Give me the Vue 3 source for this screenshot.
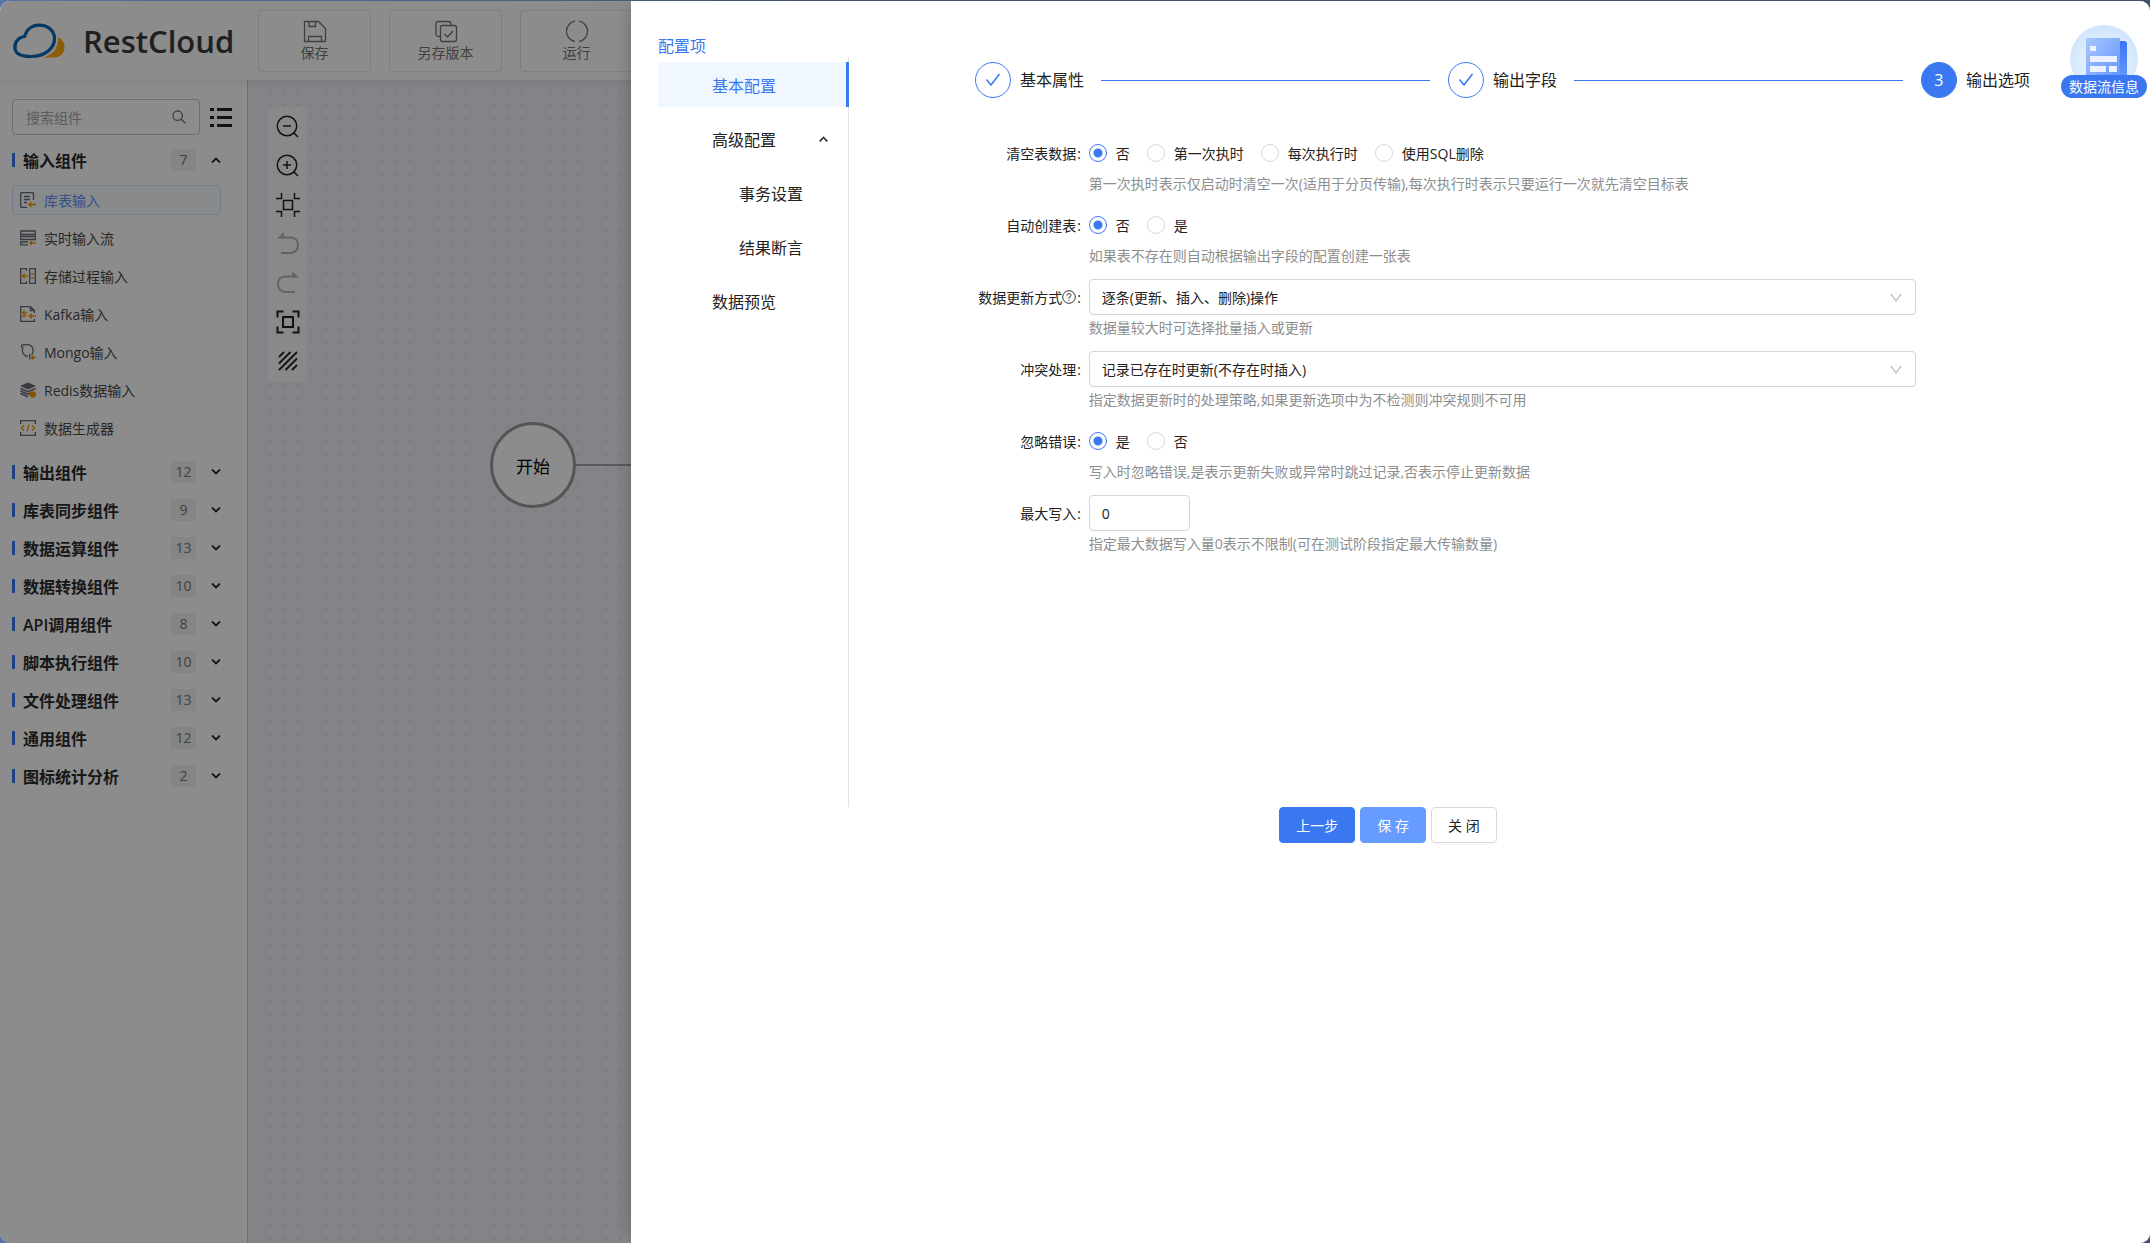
<script setup>
import { ref } from 'vue'

const actions = [
  { label: '保存', icon: 'save' },
  { label: '另存版本', icon: 'copy' },
  { label: '运行', icon: 'run' }
]

const inputs = [
  { label: '库表输入', icon: 'table' },
  { label: '实时输入流', icon: 'stream' },
  { label: '存储过程输入', icon: 'proc' },
  { label: 'Kafka输入', icon: 'kafka' },
  { label: 'Mongo输入', icon: 'mongo' },
  { label: 'Redis数据输入', icon: 'redis' },
  { label: '数据生成器', icon: 'code' }
]

const groups = [
  { label: '输入组件', count: 7, items: inputs },
  { label: '输出组件', count: 12 },
  { label: '库表同步组件', count: 9 },
  { label: '数据运算组件', count: 13 },
  { label: '数据转换组件', count: 10 },
  { label: 'API调用组件', count: 8 },
  { label: '脚本执行组件', count: 10 },
  { label: '文件处理组件', count: 13 },
  { label: '通用组件', count: 12 },
  { label: '图标统计分析', count: 2 }
]

const tools = ['缩小', '放大', '适应画布', '撤销', '重做', '全屏', '网格']

const menu = [
  { label: '基本配置', active: true },
  { label: '高级配置', open: true },
  { label: '事务设置', sub: true },
  { label: '结果断言', sub: true },
  { label: '数据预览' }
]

const steps = ['基本属性', '输出字段', '输出选项']

const fields = [
  {
    id: 'clear', label: '清空表数据', type: 'radio', value: '否',
    options: ['否', '第一次执时', '每次执行时', '使用SQL删除'],
    hint: '第一次执时表示仅启动时清空一次(适用于分页传输),每次执行时表示只要运行一次就先清空目标表'
  },
  {
    id: 'create', label: '自动创建表', type: 'radio', value: '否', options: ['否', '是'],
    hint: '如果表不存在则自动根据输出字段的配置创建一张表'
  },
  {
    id: 'update', label: '数据更新方式', help: true, type: 'select', options: ['逐条(更新、插入、删除)操作'],
    hint: '数据量较大时可选择批量插入或更新'
  },
  {
    id: 'conflict', label: '冲突处理', type: 'select', options: ['记录已存在时更新(不存在时插入)'],
    hint: '指定数据更新时的处理策略,如果更新选项中为不检测则冲突规则不可用'
  },
  {
    id: 'ignore', label: '忽略错误', type: 'radio', value: '是', options: ['是', '否'],
    hint: '写入时忽略错误,是表示更新失败或异常时跳过记录,否表示停止更新数据'
  },
  {
    id: 'max', label: '最大写入', type: 'text',
    hint: '指定最大数据写入量0表示不限制(可在测试阶段指定最大传输数量)'
  }
]

const maxWrite = ref('0')
</script>

<template>
  <div class="desktop">
    <div class="window">
      <header class="topbar">
        <div class="brand">
          <svg class="cloud" viewBox="0 0 54 36" width="54" height="36" fill="none">
            <path d="M30 34.500 C40 33 47 26 45.500 14 C50 16 53 20 52.500 25 C52 31 48 34.500 42 34.500 Z" fill="#ffa80f" />
            <path d="M3 25.500 C2 19 7 14 13 13.500 C15 6.500 20 2.500 27 2.200 C36 2 42 7.500 42.800 15 C43.500 25 33 33.500 20 33.500 C10 33.500 3.800 31.500 3 25.500 Z" stroke="#fff" stroke-width="6" fill="#fff" />
            <path d="M3 25.500 C2 19 7 14 12.500 13.500 C14.500 6.500 20 2.200 27 2.200 C36 2.200 42 7.500 42.500 15 C43 25 33 33.500 19 33.500 C10 33.500 3.800 31.500 3 25.500 Z" stroke="#0868b8" stroke-width="3.200" />
          </svg>
          <span class="brand-name">RestCloud</span>
        </div>
        <button v-for="a in actions" :key="a.label" class="action" type="button">
          <svg width="24" height="24" viewBox="0 0 24 24" fill="none" stroke="#757575" stroke-width="1.300">
            <template v-if="a.icon === 'save'">
              <path d="M1.500 2.500 H15.500 L22.500 9.500 V22.500 H1.500 Z M6 2.500 V7.500 H12.500 V2.500 M5.500 22.500 V17.500 H18.500 V22.500" />
            </template>
            <template v-else-if="a.icon === 'copy'">
              <rect x="6.500" y="6.500" width="16" height="16" rx="2" />
              <path d="M6.500 17.500 H5 Q2 17.500 2 14.500 V5 Q2 2.500 4.500 2.500 H14 Q17 2.500 17 5 V6.500 M10.500 15 L13.500 18 L19 12" />
            </template>
            <template v-else>
              <path d="M10 2.200 A10.300 10.300 0 0 0 10 22.500 M14 2.200 A10.300 10.300 0 0 1 14 22.500" />
            </template>
          </svg>
          <span>{{ a.label }}</span>
        </button>
      </header>

      <div class="workspace">
        <aside class="sidebar">
          <div class="search-row">
            <div class="search">
              <input type="text" placeholder="搜索组件" aria-label="搜索组件" />
              <svg width="14" height="14" viewBox="0 0 14 14" fill="none" stroke="#777" stroke-width="1.300">
                <circle cx="5.700" cy="5.700" r="4.700" /><path d="M9 9 L13.300 13.300" />
              </svg>
            </div>
            <button class="list-toggle" type="button" aria-label="列表">
              <svg width="22" height="20" viewBox="0 0 22 20" fill="#222">
                <path d="M0 1h4v3H0zM7 1h15v3H7zM0 9h4v3H0zM7 9h15v3H7zM0 17h4v3H0zM7 17h15v3H7z" />
              </svg>
            </button>
          </div>

          <section v-for="g in groups" :key="g.label">
            <button class="group" type="button">
              <span class="bar"></span>
              <span class="group-name">{{ g.label }}</span>
              <span class="count">{{ g.count }}</span>
              <svg width="10" height="6" viewBox="0 0 10 6" fill="none" stroke="#262626" stroke-width="1.800">
                <path :d="g.items ? 'M1 5.500 L5 1.500 L9 5.500' : 'M1 .5 L5 4.500 L9 .5'" />
              </svg>
            </button>
            <ul v-if="g.items" class="items">
              <li v-for="(it, i) in g.items" :key="it.label">
                <a href="#" class="item" :class="{ selected: i === 0 }">
                  <svg width="16" height="16" viewBox="0 0 16 16" fill="none" stroke="#656a72" stroke-width="1.300">
                    <template v-if="it.icon === 'table'">
                      <path d="M13.500 8 V1.500 Q13.500 .7 12.700 .7 H1.500 Q.7 .7 .7 1.500 V14.500 Q.7 15.300 1.500 15.300 H7 M4 4.500 H10 M4 7.500 H10 M4 10.500 H7" />
                      <path d="M16 12.500 H9 M11.500 10 L9 12.500 L11.500 15" stroke="#f59a00" />
                    </template>
                    <template v-else-if="it.icon === 'stream'">
                      <path d="M.7 1 H15.300 V4.500 H.7 Z M.7 6.500 H15.300 V9.500 H.7 Z M8 12 H.7 V14.800 H8" />
                      <path d="M16 13 H10 M12 11 L10 13 L12 15" stroke="#f59a00" />
                    </template>
                    <template v-else-if="it.icon === 'proc'">
                      <path d="M6.500 3 V.7 H.7 V15.300 H6.500 V13 M9.700 .7 H15.300 V15.300 H9.700 Z" />
                      <path d="M8 8 H2.500 M5 5.500 L2.500 8 L5 10.500 M11 6 H14 M11 10 H14" stroke="#f59a00" />
                    </template>
                    <template v-else-if="it.icon === 'kafka'">
                      <path d="M14.500 7 V4.500 L10.500 .7 H.7 V15.300 H14.500 V13 M10.500 .7 V4.500 H14.500" />
                      <path d="M16 10 H9.500 M12 7.500 L9.500 10 L12 12.500 M4 4 V12 M2 6 L7 10 M2 10 L7 6" stroke="#f59a00" />
                    </template>
                    <template v-else-if="it.icon === 'mongo'">
                      <path d="M10 15.500 L9.500 10 M8 12.500 C3 12 1.500 7 3 4 C.5 3 1 1 3 1 C7 .3 12 .5 13 5 C13.500 8 12.500 10 11.500 11" />
                      <path d="M16 13.500 H11.500 M13.500 11.500 L11.500 13.500 L13.500 15.500" stroke="#f59a00" />
                    </template>
                    <template v-else-if="it.icon === 'redis'">
                      <path d="M0 4 L8 .5 L16 4 L8 7.500 Z" fill="#656a72" stroke="none" />
                      <path d="M.5 6.500 L8 9.700 L15.500 6.500 M.5 9 L8 12.300 L12 10.500 M.5 11.500 L8 14.800" stroke-width="1.500" />
                      <circle cx="12.800" cy="12.500" r="3.200" fill="#f59a00" stroke="none" />
                    </template>
                    <template v-else>
                      <path d="M.7 4 V.7 H15.300 V4 M.7 12 V15.300 H15.300 V12" />
                      <path d="M4 5.500 L1.500 8 L4 10.500 M12 5.500 L14.500 8 L12 10.500 M9 4.500 L7 11.500" stroke="#f59a00" />
                    </template>
                  </svg>
                  <span>{{ it.label }}</span>
                </a>
              </li>
            </ul>
          </section>
        </aside>

        <main class="canvas">
          <div class="toolbox">
            <button v-for="(t, i) in tools" :key="t" type="button" :aria-label="t" :disabled="i === 3 || i === 4">
              <svg width="24" height="24" viewBox="0 0 24 24" fill="none" stroke="#222" stroke-width="1.500">
                <template v-if="i < 2">
                  <circle cx="11" cy="11" r="9.700" />
                  <path d="M17.500 17.500 L22 22 M7 11 H15" />
                  <path v-if="i === 1" d="M11 7 V15" />
                </template>
                <path v-else-if="i === 2" d="M7.500 7.500 H16.500 V16.500 H7.500 Z M5.500 0 V5.500 H0 M18.500 0 V5.500 H24 M0 18.500 H5.500 V24 M24 18.500 H18.500 V24" />
                <template v-else-if="i === 3">
                  <path d="M4 5.500 H14.500 Q22 6 22 13 Q22 20.500 14.500 21 H5" stroke="#b0b4bf" stroke-width="2" />
                  <path d="M1 6.500 L8 0 V6.500 Z" fill="#b0b4bf" stroke="none" />
                </template>
                <template v-else-if="i === 4">
                  <path d="M20 5.500 H9.500 Q2 6 2 13 Q2 20.500 9.500 21 H19" stroke="#b0b4bf" stroke-width="2" />
                  <path d="M23 6.500 L16 0 V6.500 Z" fill="#b0b4bf" stroke="none" />
                </template>
                <path v-else-if="i === 5" d="M7 7 H17 V17 H7 Z M1.500 7.500 V1.500 H7.500 M16.500 1.500 H22.500 V7.500 M22.500 16.500 V22.500 H16.500 M7.500 22.500 H1.500 V16.500" stroke-width="2" />
                <path v-else d="M3 8 L8 3 M3 14.500 L14.500 3 M3 21 L21 3 M9.500 21 L21 9.500 M16 21 L21 16" stroke-width="1.800" />
              </svg>
            </button>
          </div>
          <div class="edge"></div>
          <div class="start-node">开始</div>
        </main>
      </div>

      <div class="mask"></div>

      <div class="drawer" role="dialog" aria-label="配置项">
        <div class="drawer-body">
          <nav class="config">
            <h2>配置项</h2>
            <ul>
              <li v-for="m in menu" :key="m.label">
                <a href="#" :class="{ active: m.active, sub: m.sub }">
                  <span>{{ m.label }}</span>
                  <svg v-if="m.open" width="9" height="6" viewBox="0 0 9 6" fill="none" stroke="#333" stroke-width="1.700">
                    <path d="M.7 5.300 L4.500 1.500 L8.300 5.300" />
                  </svg>
                </a>
              </li>
            </ul>
          </nav>

          <div class="panel">
            <ol class="steps">
              <li v-for="(s, i) in steps" :key="s" :class="{ current: i === 2 }">
                <span class="step-icon">
                  <template v-if="i === 2">3</template>
                  <svg v-else width="16" height="14" viewBox="0 0 16 14" fill="none" stroke="#3a78f2" stroke-width="1.500">
                    <path d="M1.500 6.500 L6 12 L14.500 1" />
                  </svg>
                </span>
                <span>{{ s }}</span>
              </li>
            </ol>

            <form id="options" @submit.prevent>
              <div v-for="f in fields" :key="f.id" class="field" :role="f.type === 'radio' ? 'radiogroup' : undefined" :aria-labelledby="f.type === 'radio' ? f.id + '-label' : undefined">
                <component :is="f.type === 'radio' ? 'span' : 'label'" :id="f.id + '-label'" class="field-label" :for="f.type === 'radio' ? undefined : f.id">
                  <span>{{ f.label }}</span>
                  <svg v-if="f.help" width="14" height="14" viewBox="0 0 14 14" fill="none" stroke="#333">
                    <circle cx="7" cy="7" r="6.300" />
                    <path d="M5 5.500 Q5 3.700 7 3.700 Q9 3.700 9 5.400 Q9 6.700 7 7.300 V8.600 M7 9.700 V10.800" />
                  </svg>
                  <span class="colon">:</span>
                </component>
                <div class="control">
                  <div v-if="f.type === 'radio'" class="radios">
                    <label v-for="o in f.options" :key="o">
                      <input type="radio" :name="f.id" :value="o" :checked="o === f.value" />
                      <span>{{ o }}</span>
                    </label>
                  </div>
                  <div v-else-if="f.type === 'select'" class="select">
                    <select :id="f.id">
                      <option v-for="o in f.options" :key="o">{{ o }}</option>
                    </select>
                    <svg width="12" height="9" viewBox="0 0 12 9" fill="none" stroke="#bfbfbf" stroke-width="1.400">
                      <path d="M.8 .8 L6 7.800 L11.200 .8" />
                    </svg>
                  </div>
                  <input v-else :id="f.id" v-model="maxWrite" class="number" type="text" />
                  <p>{{ f.hint }}</p>
                </div>
              </div>
            </form>
          </div>
        </div>

        <footer class="buttons">
          <button type="button" class="primary">上一步</button>
          <button type="submit" form="options" class="primary light">保 存</button>
          <button type="button">关 闭</button>
        </footer>

        <button class="info" type="button">
          <svg width="68" height="68" viewBox="0 0 68 68">
            <defs>
              <radialGradient id="disc" cx=".5" cy=".6" r=".6">
                <stop offset="0" stop-color="#f2f8ff" /><stop offset="1" stop-color="#cfe4fd" />
              </radialGradient>
              <linearGradient id="doc" x1="0" y1="0" x2="1" y2="1">
                <stop offset="0" stop-color="#a9c6fd" /><stop offset="1" stop-color="#5c92fb" />
              </linearGradient>
              <linearGradient id="spine" x1="0" y1="0" x2="0" y2="1">
                <stop offset="0" stop-color="#3a74f5" /><stop offset="1" stop-color="#6ea0fa" />
              </linearGradient>
            </defs>
            <circle cx="34" cy="34" r="34" fill="url(#disc)" />
            <path d="M22 16 H54 Q57 16 57 19 V60 H22 Z" fill="url(#spine)" />
            <path d="M16 15 Q16 13 18 13 H49 Q50 13 50 14 V60 H16 Z" fill="url(#doc)" />
            <path d="M20 21h6v5h-6zM20 31h27v6h-27zM20 41h16v6h-16zM39 41h8v6h-8z" fill="#eaf1ff" />
          </svg>
          <span>数据流信息</span>
        </button>
      </div>
    </div>
  </div>
</template>

<style>
body {
  margin: 0;
  font-family: 'Open Sans', 'Noto Sans CJK SC', sans-serif;
  font-size: 14px;
  color: #222;
}
</style>

<style scoped>
.desktop {
  display: flex;
  min-height: 100vh;
  box-sizing: border-box;
  padding-top: 1px;
  background: linear-gradient(90deg, #5673a3, #435069 40%);
}
.window {
  position: relative;
  display: flex;
  flex-direction: column;
  flex: 1;
  overflow: hidden;
  border-radius: 10px;
  background: #fff;
}
button {
  font: inherit;
  color: inherit;
  cursor: pointer;
}
a {
  color: inherit;
  text-decoration: none;
}
ul, ol {
  list-style: none;
  margin: 0;
  padding: 0;
}

/* top bar */
.topbar {
  position: relative;
  z-index: 1;
  display: flex;
  align-items: center;
  gap: 18px;
  height: 79px;
  background: #fff;
  box-shadow: 0 2px 8px rgba(0, 0, 0, 0.08);
}
.brand {
  display: flex;
  align-items: center;
  gap: 17px;
  flex: none;
  width: 228px;
  padding-left: 12px;
}
.brand-name {
  font: 600 31px/40px 'Open Sans', sans-serif;
  color: #3b3b3b;
}
.action {
  display: flex;
  flex-direction: column;
  align-items: center;
  flex: none;
  box-sizing: border-box;
  width: 113px;
  height: 62px;
  padding: 8px 0 0;
  border: 1px solid #dfe7f4;
  border-radius: 4px;
  background: #fff;
  line-height: 20px;
  color: #757575;
}

/* component list */
.workspace {
  display: flex;
  flex: 1;
}
.sidebar {
  flex: none;
  box-sizing: border-box;
  width: 248px;
  padding: 19px 26px 0 12px;
  border-right: 1px solid #c8c8cc;
}
.search-row {
  display: flex;
  align-items: center;
  gap: 10px;
  margin: 0 -11px 6px 0;
}
.search {
  display: flex;
  align-items: center;
  flex: 1;
  min-width: 0;
  box-sizing: border-box;
  height: 36px;
  padding: 0 13px;
  border: 1px solid #c9c9c9;
  border-radius: 4px;
}
.search svg {
  flex: none;
}
.search input {
  flex: 1;
  min-width: 0;
  padding: 0;
  border: 0;
  outline: 0;
  background: none;
  font: inherit;
}
.search input::placeholder {
  color: #a8a8a8;
}
.list-toggle {
  display: flex;
  flex: none;
  padding: 0;
  border: 0;
  background: none;
}
.group {
  display: flex;
  align-items: center;
  width: 100%;
  height: 38px;
  padding: 0;
  border: 0;
  background: none;
  text-align: left;
}
.bar {
  width: 3px;
  height: 14px;
  margin-right: 8px;
  background: #3a78f2;
}
.group-name {
  flex: 1;
  font-size: 16px;
  font-weight: 600;
  color: #2b2b2b;
}
.count {
  width: 25px;
  margin-right: 15px;
  line-height: 22px;
  text-align: center;
  color: #777;
  background: #f2f2f2;
}
.items {
  padding: 2px 0 6px;
}
.items li {
  padding: 4px 0;
}
.item {
  display: flex;
  align-items: center;
  gap: 8px;
  box-sizing: border-box;
  height: 30px;
  padding-left: 7px;
  border: 1px solid transparent;
  border-radius: 4px;
  color: #4a4a4a;
}
.item.selected {
  color: #6193fb;
  border-color: #cddff7;
  background: #f8fbff;
}

/* canvas */
.canvas {
  position: relative;
  flex: 1;
  overflow: hidden;
  background: radial-gradient(circle at 8px 11px, #e2e4ed 1px, transparent 2px) 0 0 / 14px 14px #eff1f8;
}
.toolbox {
  position: absolute;
  left: 20px;
  top: 27px;
  display: flex;
  flex-direction: column;
  padding: 0 0 2px;
  background: #fafafc;
}
.toolbox button {
  display: flex;
  align-items: center;
  justify-content: center;
  width: 39px;
  height: 39px;
  padding: 0;
  border: 0;
  background: none;
}
.start-node {
  position: absolute;
  left: 242px;
  top: 342px;
  display: flex;
  align-items: center;
  justify-content: center;
  box-sizing: border-box;
  width: 86px;
  height: 86px;
  border: 3px solid #999;
  border-radius: 50%;
  background: #fff;
  font-size: 17px;
  color: #000;
}
.edge {
  position: absolute;
  left: 328px;
  right: 0;
  top: 384px;
  height: 2px;
  background: #a5a5a8;
}
.mask {
  position: absolute;
  inset: 0;
  z-index: 2;
  background: rgba(0, 0, 0, 0.45);
}

/* drawer */
.drawer {
  position: absolute;
  inset: 0 0 0 631px;
  z-index: 3;
  box-sizing: border-box;
  padding: 27px;
  background: #fff;
  box-shadow: -6px 0 16px -8px rgba(0, 0, 0, 0.3);
}
.drawer-body {
  display: flex;
  gap: 33px;
}
.config {
  display: flex;
  flex-direction: column;
  flex: none;
  width: 191px;
}
.config h2 {
  margin: 0;
  padding-top: 8px;
  font-size: 16px;
  font-weight: 400;
  line-height: 21px;
  color: #3a78f2;
}
.config ul {
  display: flex;
  flex-direction: column;
  flex: 1;
  gap: 9px;
  box-sizing: border-box;
  min-height: 750px;
  padding-top: 5px;
  border-right: 1px solid #e3e3e3;
}
.config a {
  display: flex;
  align-items: center;
  justify-content: space-between;
  height: 45px;
  margin-right: -1px;
  padding: 0 21px 0 54px;
  font-size: 16px;
}
.config a.sub {
  padding-left: 81px;
}
.config a.active {
  color: #3a78f2;
  background: #f0f7ff;
  border-right: 3px solid #3a78f2;
}
.panel {
  flex: 1;
  padding-top: 34px;
}
.steps {
  display: flex;
  margin: 0 7.5% 37px;
  font-size: 16px;
  line-height: 36px;
}
.steps li {
  display: flex;
  align-items: center;
  flex: 1;
}
.steps li:last-child {
  flex: none;
}
.steps li:not(:last-child)::after {
  content: '';
  flex: 1;
  height: 1px;
  margin: 1px 18px 0 17px;
  background: #3a78f2;
}
.step-icon {
  display: flex;
  align-items: center;
  justify-content: center;
  box-sizing: border-box;
  width: 36px;
  height: 36px;
  margin-right: 9px;
  border: 1px solid #3a78f2;
  border-radius: 50%;
}
.current .step-icon {
  color: #fff;
  background: #3a78f2;
}
.field {
  display: grid;
  grid-template-columns: 4fr 16fr 4fr;
  margin-bottom: 10px;
}
.field-label {
  display: flex;
  align-items: center;
  justify-content: flex-end;
  height: 36px;
  padding-right: 8px;
}
.colon {
  margin-left: 1px;
}
.radios {
  display: flex;
  gap: 17px;
  height: 36px;
}
.radios label {
  display: flex;
  align-items: center;
  gap: 9px;
}
.radios input {
  appearance: none;
  width: 18px;
  height: 18px;
  margin: 0;
  border: 1px solid #d9d9d9;
  border-radius: 50%;
}
.radios input:checked {
  border-color: #3a78f2;
  background: radial-gradient(circle, #3a78f2 4px, transparent 5px);
}
.select {
  display: grid;
  align-items: center;
}
.select > * {
  grid-area: 1 / 1;
}
.select svg {
  justify-self: end;
  margin-right: 14px;
  pointer-events: none;
}
select, .number {
  appearance: none;
  box-sizing: border-box;
  width: 100%;
  height: 36px;
  padding: 0 12px;
  border: 1px solid #d3d5dc;
  border-radius: 4px;
  background: #fff;
  font: inherit;
  color: inherit;
}
.number {
  display: block;
  width: 101px;
}
.control p {
  margin: 0;
  line-height: 26px;
  color: #8e8e8e;
  white-space: nowrap;
}
.buttons {
  display: flex;
  justify-content: center;
  gap: 5px;
  padding-right: 5px;
}
.buttons button {
  height: 36px;
  padding: 0 16px;
  border: 1px solid #d9d9d9;
  border-radius: 4px;
  background: #fff;
  box-shadow: 0 2px 0 rgba(0, 0, 0, 0.02);
}
.buttons .primary {
  color: #fff;
  border-color: #3a78f2;
  background: #3a78f2;
}
.buttons .light {
  border-color: #669bff;
  background: #669bff;
}
.info {
  position: absolute;
  top: 24px;
  right: 3px;
  display: flex;
  flex-direction: column;
  align-items: center;
  width: 86px;
  padding: 0;
  border: 0;
  background: none;
}
.info span {
  width: 100%;
  margin-top: -18px;
  border-radius: 12px;
  line-height: 23px;
  color: #fff;
  background: #3a78f2;
}
</style>
